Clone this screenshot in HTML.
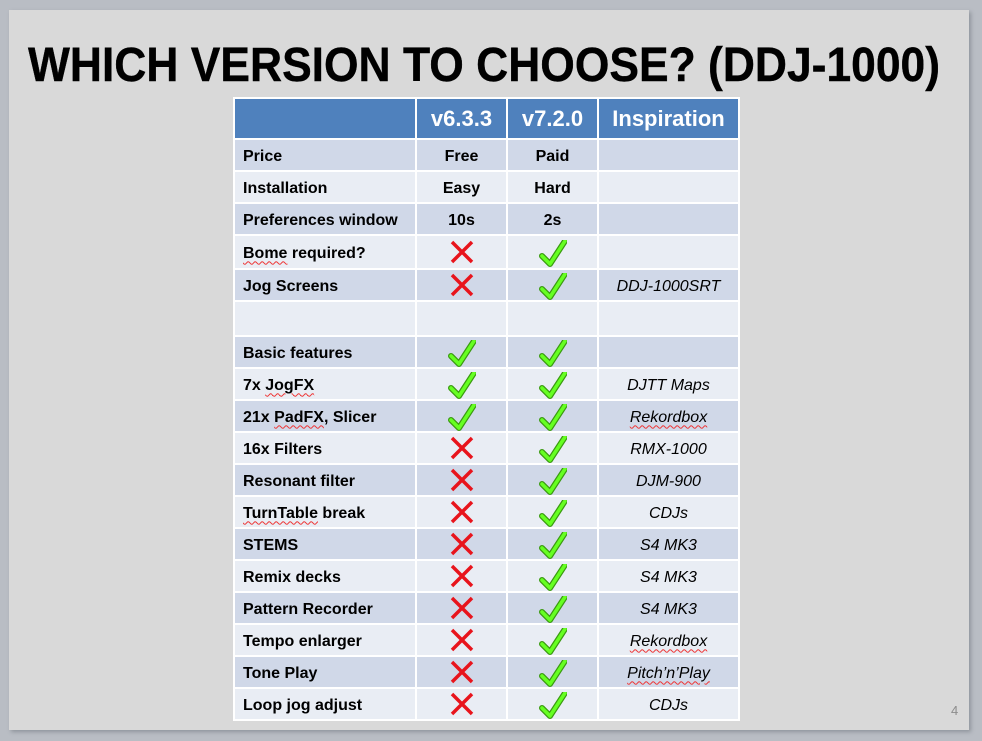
<!DOCTYPE html>
<html><head><meta charset="utf-8"><style>
body{margin:0;width:982px;height:741px;background:#b9bdc4;position:relative;overflow:hidden;font-family:"Liberation Sans",sans-serif}
.slide{position:absolute;left:9px;top:10px;width:960px;height:720px;background:#d9d9d9;box-shadow:2px 2px 4px #8f949c}
svg.t{position:absolute;left:0;top:0}
table{position:absolute;left:233px;top:97px;border-collapse:collapse;table-layout:fixed}
td{border:2px solid #fff;padding:3px 0 0 0;font-size:16px;font-weight:bold;color:#000;text-align:center;height:27px}
td.m{padding:0;height:30px}
td.l{text-align:left;padding-left:8px}
td.i{font-weight:normal;font-style:italic}
tr.h td{background:#4f81bd;color:#fff;font-size:22px;height:38px;padding-top:1px}
tr.d td{background:#d0d8e8}
tr.w td{background:#e9edf4}
.u{text-decoration:underline wavy #e33;text-decoration-thickness:1px;text-underline-offset:3px}
.pg{position:absolute;left:951px;top:703px;color:#8c8c8c;font-size:13px}
</style></head><body>
<div class="slide"></div>
<svg class="t" width="982" height="100"><text x="28" y="81" font-family="Liberation Sans" font-weight="bold" font-size="48" textLength="912" lengthAdjust="spacingAndGlyphs" fill="#000" stroke="#000" stroke-width="0.4">WHICH VERSION TO CHOOSE? (DDJ-1000)</text></svg>
<table>
<colgroup><col style="width:182px"><col style="width:91px"><col style="width:91px"><col style="width:141px"></colgroup>
<tr class="h"><td></td><td>v6.3.3</td><td>v7.2.0</td><td>Inspiration</td></tr>
<tr class="d"><td class="l">Price</td><td>Free</td><td>Paid</td><td></td></tr>
<tr class="w"><td class="l">Installation</td><td>Easy</td><td>Hard</td><td></td></tr>
<tr class="d"><td class="l">Preferences window</td><td>10s</td><td>2s</td><td></td></tr>
<tr class="w"><td class="l" style="height:29px"><span class="u">Bome</span> required?</td><td>X</td><td>C</td><td></td></tr>
<tr class="d"><td class="l">Jog Screens</td><td>X</td><td>C</td><td class="i">DDJ-1000SRT</td></tr>
<tr class="w"><td class="l" style="height:30px"></td><td></td><td></td><td></td></tr>
<tr class="d"><td class="l">Basic features</td><td>C</td><td>C</td><td></td></tr>
<tr class="w"><td class="l">7x <span class="u">JogFX</span></td><td>C</td><td>C</td><td class="i">DJTT Maps</td></tr>
<tr class="d"><td class="l">21x <span class="u">PadFX</span>, Slicer</td><td>C</td><td>C</td><td class="i"><span class="u">Rekordbox</span></td></tr>
<tr class="w"><td class="l">16x Filters</td><td>X</td><td>C</td><td class="i">RMX-1000</td></tr>
<tr class="d"><td class="l">Resonant filter</td><td>X</td><td>C</td><td class="i">DJM-900</td></tr>
<tr class="w"><td class="l"><span class="u">TurnTable</span> break</td><td>X</td><td>C</td><td class="i">CDJs</td></tr>
<tr class="d"><td class="l">STEMS</td><td>X</td><td>C</td><td class="i">S4 MK3</td></tr>
<tr class="w"><td class="l">Remix decks</td><td>X</td><td>C</td><td class="i">S4 MK3</td></tr>
<tr class="d"><td class="l">Pattern Recorder</td><td>X</td><td>C</td><td class="i">S4 MK3</td></tr>
<tr class="w"><td class="l">Tempo enlarger</td><td>X</td><td>C</td><td class="i"><span class="u">Rekordbox</span></td></tr>
<tr class="d"><td class="l">Tone Play</td><td>X</td><td>C</td><td class="i"><span class="u">Pitch’n’Play</span></td></tr>
<tr class="w"><td class="l">Loop jog adjust</td><td>X</td><td>C</td><td class="i">CDJs</td></tr>
</table>
<div class="pg">4</div>
<script>
document.querySelectorAll('td').forEach(function(td){
 var t=td.textContent;
 if(td.cellIndex>0&&td.cellIndex<3&&(t==='X'||t==='C')){
  td.className='m';
  td.innerHTML=t==='X'
  ?'<svg width="26" height="26" viewBox="-13 -13 26 26" style="display:block;margin:auto"><path d="M-10,-10 L10,10 M10,-10 L-10,10" stroke="#e8141c" stroke-width="3.5"/></svg>'
  :'<svg width="28" height="28" viewBox="-14 -14 28 28" style="display:block;margin:auto;position:relative;top:2px"><path d="M-11,2 L-3,10 L12,-13" stroke="#3a9a10" stroke-width="6" fill="none" stroke-linecap="round" stroke-linejoin="round"/><path d="M-11,2 L-3,10 L12,-13" stroke="#66ff22" stroke-width="3.5" fill="none" stroke-linecap="round" stroke-linejoin="round"/></svg>';
 }
});
</script>
</body></html>
